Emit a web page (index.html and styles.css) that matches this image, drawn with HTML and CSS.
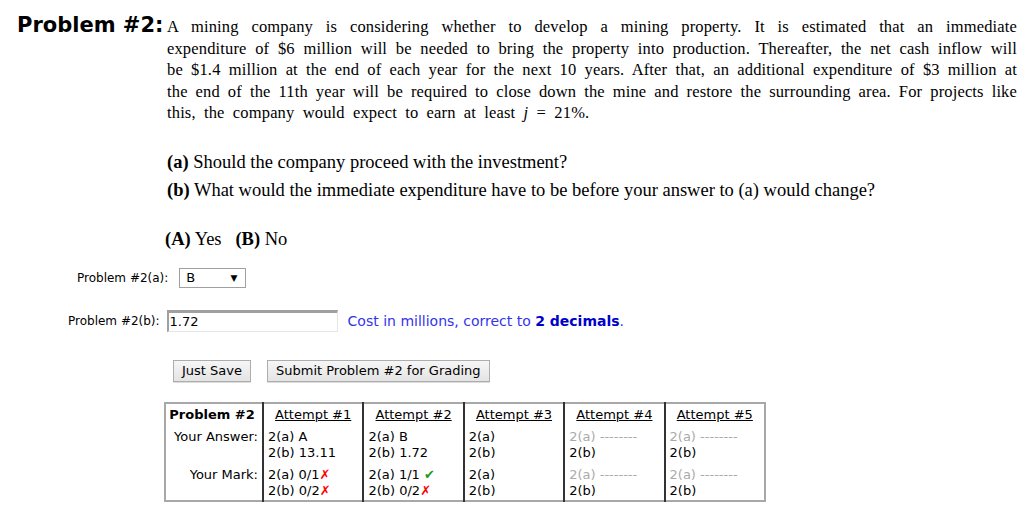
FILE: index.html
```html
<!DOCTYPE html>
<html>
<head>
<meta charset="utf-8">
<link rel="stylesheet" href="styles.css">
</head>
<body>
<div class="problem">
  <div class="plabel">Problem #2:</div>
  <div class="pbody">
    <p class="statement"><span class="ln">A mining company is considering whether to develop a mining property. It is estimated that an immediate</span><span class="ln">expenditure of $6 million will be needed to bring the property into production. Thereafter, the net cash inflow will</span><span class="ln">be $1.4 million at the end of each year for the next 10 years. After that, an additional expenditure of $3 million at</span><span class="ln">the end of the 11th year will be required to close down the mine and restore the surrounding area. For projects like</span><span class="ln last">this, the company would expect to earn at least <i>j</i> = 21%.</span></p>
    <div class="questions">
      <p><b>(a)</b> Should the company proceed with the investment?</p>
      <p><b>(b)</b> What would the immediate expenditure have to be before your answer to (a) would change?</p>
    </div>
    <p class="choices"><b>(A)</b> Yes &nbsp;&nbsp;<b>(B)</b> No</p>
  </div>
</div>

<div class="row row-a">
  <span class="flabel">Problem #2(a):</span>
  <span class="select"><span>B</span><span class="arrow">▼</span></span>
</div>

<div class="row row-b">
  <span class="flabel">Problem #2(b):</span>
  <span class="input">1.72</span>
  <span class="hint">Cost in millions, correct to <b>2 decimals</b>.</span>
</div>

<div class="buttons">
  <span class="btn">Just Save</span>
  <span class="btn">Submit Problem #2 for Grading</span>
</div>

<table class="attempts">
  <colgroup>
    <col class="c0"><col><col><col><col><col>
  </colgroup>
  <tr class="head">
    <th class="first">Problem #2</th>
    <th><u>Attempt #1</u></th>
    <th><u>Attempt #2</u></th>
    <th><u>Attempt #3</u></th>
    <th><u>Attempt #4</u></th>
    <th><u>Attempt #5</u></th>
  </tr>
  <tr class="ans">
    <td class="first">Your Answer:</td>
    <td>2(a) A<br>2(b) 13.11</td>
    <td>2(a) B<br>2(b) 1.72</td>
    <td>2(a)<br>2(b)</td>
    <td><span class="dim">2(a) --------</span><br>2(b)</td>
    <td><span class="dim">2(a) --------</span><br>2(b)</td>
  </tr>
  <tr class="mark">
    <td class="first">Your Mark:</td>
    <td>2(a) 0/1<span class="x">✗</span><br>2(b) 0/2<span class="x">✗</span></td>
    <td>2(a) 1/1 <span class="ok">✔</span><br>2(b) 0/2<span class="x">✗</span></td>
    <td>2(a)<br>2(b)</td>
    <td><span class="dim">2(a) --------</span><br>2(b)</td>
    <td><span class="dim">2(a) --------</span><br>2(b)</td>
  </tr>
</table>
</body>
</html>
```

FILE: styles.css
```css
html, body {
  margin: 0;
  padding: 0;
  background: #fff;
  color: #000;
}
body {
  font-family: "DejaVu Sans", Verdana, sans-serif;
  font-size: 13px;
}
.problem {
  display: flex;
  padding: 13px 0 0 17px;
}
.plabel {
  width: 150px;
  font-weight: bold;
  font-size: 21px;
  line-height: 24px;
}
.pbody {
  width: 850px;
  font-family: "Liberation Serif", "Times New Roman", serif;
}
.statement {
  margin: 0;
  padding-top: 3px;
  font-size: 16.5px;
  line-height: 21.5px;
  letter-spacing: 0.15px;
}
.statement .ln {
  display: block;
  white-space: nowrap;
  text-align: justify;
  text-align-last: justify;
}
.statement .ln.last {
  text-align-last: left;
  word-spacing: 4px;
}
.questions {
  margin-top: 24px;
}
.questions p {
  margin: 0;
  font-size: 18.5px;
  line-height: 28px;
}
.choices {
  margin: 24px 0 0 -2px;
  font-size: 18.5px;
  line-height: 22px;
}
.row {
  display: flex;
  align-items: center;
  font-size: 12px;
}
.row-a {
  margin-top: 18px;
  padding-left: 77px;
}
.row-a .flabel {
  margin-right: 11px;
}
.select {
  display: flex;
  justify-content: space-between;
  align-items: center;
  box-sizing: border-box;
  width: 67px;
  height: 20px;
  border: 1px solid #a0a0a0;
  padding: 0 8px 0 6px;
  font-size: 13px;
}
.arrow {
  font-size: 9px;
}
.row-b {
  margin-top: 22px;
  padding-left: 68px;
}
.row-b .flabel {
  margin-right: 7px;
}
.input {
  box-sizing: border-box;
  width: 171px;
  height: 22px;
  border-style: solid;
  border-color: #a0a0a0 #e6e6e6 #e6e6e6 #a0a0a0;
  border-width: 3px 1px 1px 2px;
  padding: 0 1px;
  font-size: 13px;
  line-height: 17px;
  background: #fff;
}
.hint {
  margin-left: 10px;
  font-size: 14px;
  color: #3333ee;
}
.hint b {
  color: #0000cc;
}
.buttons {
  display: flex;
  gap: 16px;
  margin-top: 28px;
  padding-left: 173px;
}
.btn {
  box-sizing: border-box;
  height: 22px;
  padding: 0 8px;
  border: 1px solid #adadad;
  background: linear-gradient(#f6f6f6, #e4e4e4);
  font-size: 13px;
  line-height: 20px;
  box-shadow: 0 1px 0 #ddd;
}
.attempts {
  margin: 20px 0 0 164px;
  width: 602px;
  table-layout: fixed;
  border-collapse: collapse;
  border: 2px solid #a8a8a8;
  font-size: 13px;
  line-height: 16px;
}
.attempts col.c0 {
  width: 98px;
}
.attempts th, .attempts td {
  padding: 0 0 0 4px;
  text-align: left;
  vertical-align: top;
  border-left: 2px solid #333;
  white-space: nowrap;
  overflow: hidden;
}
.attempts th {
  font-weight: normal;
  text-align: center;
  padding: 3px 0 6px;
}
.attempts .first {
  border-left: none;
  text-align: right;
  padding-right: 4px;
}
.attempts th.first {
  font-weight: bold;
  text-align: center;
}
.attempts tr.ans td {
  padding-bottom: 6px;
}
.attempts tr.mark td {
  padding-bottom: 1px;
}
.dim {
  color: #aaa;
}
.x {
  color: #ff0000;
  font-weight: bold;
}
.ok {
  color: #229922;
}
```
